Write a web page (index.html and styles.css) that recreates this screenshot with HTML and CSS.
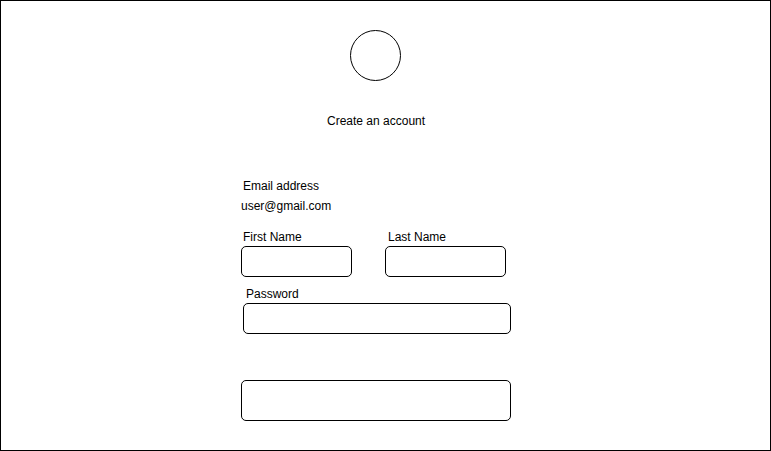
FILE: index.html
```html
<!DOCTYPE html>
<html lang="en">
<head>
<meta charset="utf-8">
<title>Create an account</title>
<link rel="stylesheet" href="styles.css">
</head>
<body>
<div class="frame">
  <div class="logo"></div>
  <div class="title">Create an account</div>
  <div class="form">
    <div class="label email-label">Email address</div>
    <div class="value">user@gmail.com</div>
    <div class="name-row">
      <div class="field first">
        <div class="label">First Name</div>
        <div class="box box-first"></div>
      </div>
      <div class="field last">
        <div class="label">Last Name</div>
        <div class="box box-last"></div>
      </div>
    </div>
    <div class="label password-label">Password</div>
    <div class="box box-password"></div>
    <div class="box box-submit"></div>
  </div>
</div>
</body>
</html>
```

FILE: styles.css
```css
* { box-sizing: border-box; }
html, body { margin: 0; padding: 0; background: #fff; }
body {
  font-family: "Liberation Sans", Arial, sans-serif;
  font-size: 12px;
  line-height: 14px;
  color: #000;
}
.frame {
  width: 771px;
  height: 451px;
  border: 1px solid #000;
  display: flex;
  flex-direction: column;
  align-items: flex-start;
  overflow: hidden;
}
.logo {
  width: 51px;
  height: 51px;
  margin: 29px 0 0 349px;
  border: 1px solid #000;
  border-radius: 50%;
}
.title {
  margin: 33px 0 0 326px;
}
.form {
  margin: 51px 0 0 240px;
  display: flex;
  flex-direction: column;
  align-items: flex-start;
}
.label { white-space: nowrap; }
.email-label { padding-left: 2px; }
.value { margin-top: 6px; }
.name-row {
  display: flex;
  gap: 33px;
  margin-top: 17px;
}
.field { display: flex; flex-direction: column; }
.first .label { padding-left: 2px; }
.last .label { padding-left: 3px; }
.box {
  border: 1px solid #000;
  border-radius: 5px;
}
.box-first, .box-last { height: 31px; margin-top: 2px; }
.box-first { width: 111px; }
.box-last { width: 121px; }
.password-label { margin-top: 10px; padding-left: 5px; }
.box-password { width: 268px; height: 31px; margin: 2px 0 0 2px; }
.box-submit { width: 270px; height: 41px; margin-top: 46px; }
```
